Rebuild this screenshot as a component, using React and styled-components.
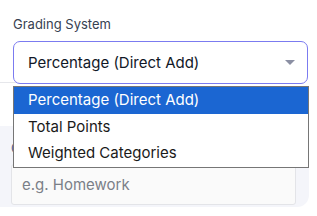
import styled, { createGlobalStyle } from 'styled-components';

const GlobalStyle = createGlobalStyle`
  html, body {
    margin: 0;
    padding: 0;
    background: #ffffff;
    font-family: Inter, "Noto Sans", sans-serif;
  }
`;

const options = ['Percentage (Direct Add)', 'Total Points', 'Weighted Categories'];

export default function App() {
  return (
    <>
      <GlobalStyle />
      <Page>
        <Field>
          <Label>Grading System</Label>
          <SelectBox>
            <span>Percentage (Direct Add)</span>
            <svg width='10' height='6' viewBox='0 0 10 6'>
              <path d='M0 0 L10 0 L5 5 Z' fill='#8b8fa3' />
            </svg>
          </SelectBox>
          <Divider />
          <OptionList>
            {options.map((o, i) => (
              <Option key={o} selected={i === 0}>
                {o}
              </Option>
            ))}
          </OptionList>
        </Field>
        <Panel>
          <PanelLabel>Category Name</PanelLabel>
          <Input placeholder='e.g. Homework' />
        </Panel>
      </Page>
    </>
  );
}

const Page = styled.div`
  width: 317px;
  height: 216px;
  overflow: hidden;
  display: flex;
  flex-direction: column;
`;

const Field = styled.div`
  position: relative;
  padding: 16px 9px 0 13px;
  display: flex;
  flex-direction: column;
`;

const Label = styled.label`
  font-size: 13px;
  line-height: 16px;
  color: #374151;
  margin-bottom: 9px;
`;

const SelectBox = styled.div`
  position: relative;
  z-index: 2;
  box-sizing: border-box;
  height: 43px;
  border: 1.5px solid #7b7bf0;
  border-radius: 7px;
  background: #ffffff;
  display: flex;
  align-items: center;
  justify-content: space-between;
  padding: 0 12px 0 14px;
  font-size: 15px;
  color: #111827;
  svg {
    margin-top: 1px;
  }
`;

const Divider = styled.div`
  position: absolute;
  left: 0;
  top: 82px;
  width: 300px;
  height: 1px;
  background: #e6e7eb;
`;

const OptionList = styled.ul`
  position: absolute;
  z-index: 3;
  top: 86px;
  left: 13px;
  box-sizing: border-box;
  width: 296px;
  margin: 0;
  padding: 0;
  list-style: none;
  border: 1px solid #767676;
  background: #ffffff;
`;

const Option = styled.li`
  height: 26.5px;
  line-height: 26px;
  padding-left: 14px;
  font-size: 15px;
  color: ${(p) => (p.selected ? '#ffffff' : '#1a1a1a')};
  background: ${(p) => (p.selected ? '#1b66d2' : '#ffffff')};
`;

const Panel = styled.div`
  margin-top: 42px;
  width: 309px;
  height: 81px;
  box-sizing: border-box;
  background: #f4f5fa;
  border-bottom-right-radius: 12px;
  padding: 15px 0 0 11px;
  display: flex;
  flex-direction: column;
`;

const PanelLabel = styled.label`
  font-size: 12.5px;
  line-height: 16px;
  color: #4a5a8a;
  margin-bottom: 7px;
`;

const Input = styled.input`
  box-sizing: border-box;
  width: 285px;
  height: 41px;
  border: 1px solid #e3e4e8;
  border-radius: 3px;
  background: #fafafa;
  padding: 0 10px;
  font-family: Inter, "Noto Sans", sans-serif;
  font-size: 15px;
  color: #111827;
  outline: none;
  &::placeholder {
    color: #7a7f88;
  }
`;
